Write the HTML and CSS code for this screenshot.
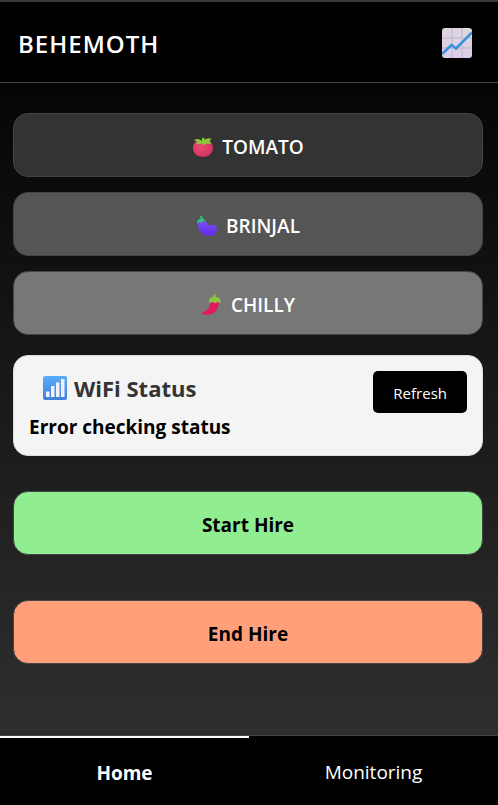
FILE: index.html
```html
<!DOCTYPE html>
<html lang="en">
<head>
<meta charset="utf-8">
<meta name="viewport" content="width=device-width, initial-scale=1">
<title>Behemoth</title>
<link rel="stylesheet" href="styles.css">
</head>
<body>
<header class="topbar">
  <h1 class="brand">BEHEMOTH</h1>
  <button class="chart-button" type="button" aria-label="Charts">
    <svg class="chart-icon" viewBox="0 0 30 30" aria-hidden="true">
      <defs>
        <linearGradient id="paper" x1="0" y1="0" x2="0" y2="1"><stop offset="0" stop-color="#ddd7df"/><stop offset="1" stop-color="#dccdec"/></linearGradient>
      </defs>
      <rect width="30" height="30" rx="3" fill="url(#paper)"/>
      <path d="M10 0V30M20 0V30M0 10H30M0 20H30" stroke="#bdb5c3" stroke-width="1"/>
      <path d="M0 26 9.500 17 14 20.500 30 4.500" fill="none" stroke="#3594d9" stroke-width="2.500"/>
    </svg>
  </button>
</header>

<main class="content">
  <div class="stack">
    <button class="tile tomato" type="button">
      <svg class="crop-icon" viewBox="0 0 22 22" aria-hidden="true">
        <defs><radialGradient id="red" cx=".4" cy=".4" r=".7"><stop offset="0" stop-color="#ed4c71"/><stop offset="1" stop-color="#cf2c61"/></radialGradient></defs>
        <path d="M11 5C5 3 1 6.500 1 12c0 5 4 9 10 9s10-4 10-9c0-5.500-4-9-10-7Z" fill="url(#red)"/>
        <path d="M10 5V2h2.500v2c3-2 5-2 7-1l-2 2 2 3-5-.500-2.500 1.500-2-1.500L4 8.500 5.500 6 2 4c3-2 6-1 8 1Z" fill="#89c93a"/>
      </svg>TOMATO</button>
    <button class="tile brinjal" type="button">
      <svg class="crop-icon" viewBox="0 0 22 22" aria-hidden="true">
        <defs><linearGradient id="violet" x1="0" y1="0" x2="0" y2="1"><stop offset="0" stop-color="#8154f5"/><stop offset="1" stop-color="#5d2be6"/></linearGradient></defs>
        <path d="M2 7c-1 7 3 14 11 14 5 0 8-3 8-6.500 0-3.500-2.500-5.500-5.500-4.500-2.500.800-4-.500-5-3C9 4 4 3 2 7Z" fill="url(#violet)"/>
        <path d="M4 1 6.500.500 6.500 3.500c2 .500 2.800 1.500 3 3L7 6 5.500 8 3.500 7 1 8.500C.500 6 2 4.500 4.500 3.500Z" fill="#2fbd78"/>
      </svg>BRINJAL</button>
    <button class="tile chilly" type="button">
      <svg class="crop-icon" viewBox="0 0 22 22" aria-hidden="true">
        <path d="M9 7c1 6-2 9-7 11-1 .500-1 2 0 2.300C11 22.500 18.500 17 18 7Z" fill="#e3195f"/>
        <path d="M12.500 0.500h2V3c3.500 0 5.500 2 5 6l-3-1-2.500 1.200-2.500-1.200L8 9C7.500 5 9 3 12.500 3Z" fill="#8bc53d"/>
      </svg>CHILLY</button>
  </div>

  <section class="status">
    <div class="status-text">
      <h2 class="status-title">
        <svg class="signal-icon" viewBox="0 0 24 24" aria-hidden="true">
          <defs><linearGradient id="blue" x1="0" y1="0" x2="0" y2="1"><stop offset="0" stop-color="#58adf9"/><stop offset="1" stop-color="#427edd"/></linearGradient></defs>
          <rect width="24" height="24" rx="2" fill="url(#blue)"/>
          <path d="M3 15.500h3.500v5.500H3ZM8 10h3.500v11H8ZM13 6.500h3.500V21H13ZM18 3h3.500v18H18Z" fill="#f4effa"/>
        </svg>WiFi Status</h2>
      <p class="status-message">Error checking status</p>
    </div>
    <button class="refresh" type="button">Refresh</button>
  </section>

  <div class="actions">
    <button class="tile start" type="button">Start Hire</button>
    <button class="tile end" type="button">End Hire</button>
  </div>
</main>

<nav class="tabs">
  <a class="tab active" href="#home" aria-current="page">Home</a>
  <a class="tab" href="#monitoring">Monitoring</a>
</nav>
</body>
</html>
```
FILE: styles.css
```css
* {
  box-sizing: border-box;
}

body {
  margin: 0;
  min-height: 100vh;
  display: flex;
  flex-direction: column;
  border-top: 2px solid #3a3a3a;
  background: linear-gradient(#000, #333);
  font-family: "Segoe UI", "Open Sans", sans-serif;
  color: #fff;
}

button {
  font-family: inherit;
  cursor: pointer;
}

.topbar {
  display: flex;
  align-items: center;
  justify-content: space-between;
  height: 81px;
  padding: 2px 26px 0 18px;
  background: #000;
  border-bottom: 1px solid #444;
}

.brand {
  margin: 0;
  font-size: 24px;
  font-weight: 600;
  letter-spacing: 1px;
}

.chart-button {
  padding: 0;
  border: 0;
  background: none;
}

.chart-icon {
  display: block;
  width: 30px;
  height: 30px;
}

.content {
  flex: 1;
  padding: 30px 15px 30px 13px;
}

.stack {
  display: grid;
  gap: 15px;
}

.tile {
  display: flex;
  align-items: center;
  justify-content: center;
  gap: 8px;
  width: 100%;
  height: 64px;
  padding: 4px 0 0;
  border: 1px solid #444;
  border-radius: 15px;
  color: #fff;
  font-size: 19px;
  font-weight: 600;
}

.crop-icon {
  width: 22px;
  height: 22px;
}

.tomato {
  background: #333;
}

.brinjal {
  background: #555;
}

.chilly {
  background: #777;
}

.status {
  display: flex;
  align-items: flex-start;
  justify-content: space-between;
  margin-top: 20px;
  padding: 15px;
  border: 1px solid #ddd;
  border-radius: 15px;
  background: #f4f4f4;
}

.status-title {
  display: flex;
  align-items: center;
  gap: 7px;
  margin: 0;
  padding: 1px 0 0 14px;
  color: #333;
  font-size: 22px;
  font-weight: 700;
  line-height: 32px;
}

.signal-icon {
  width: 24px;
  height: 24px;
}

.status-message {
  margin: 10px 0 0;
  color: #000;
  font-size: 19px;
  font-weight: 700;
  line-height: 26px;
}

.refresh {
  height: 42px;
  padding: 2px 20px 0;
  border: 0;
  border-radius: 5px;
  background: #000;
  color: #fff;
  font-size: 15px;
}

.actions {
  display: grid;
  gap: 45px;
  margin-top: 35px;
}

.start,
.end {
  color: #000;
  font-weight: 700;
}

.start {
  background: #90ee90;
}

.end {
  background: #ffa07a;
}

.tabs {
  display: grid;
  grid-template-columns: 1fr 1fr;
  height: 70px;
  border-top: 1px solid #444;
  background: #000;
}

.tab {
  display: flex;
  align-items: center;
  justify-content: center;
  padding-top: 2px;
  color: #fff;
  font-size: 19px;
  text-decoration: none;
}

.tab.active {
  border-top: 2px solid #fff;
  font-weight: 700;
}
```
